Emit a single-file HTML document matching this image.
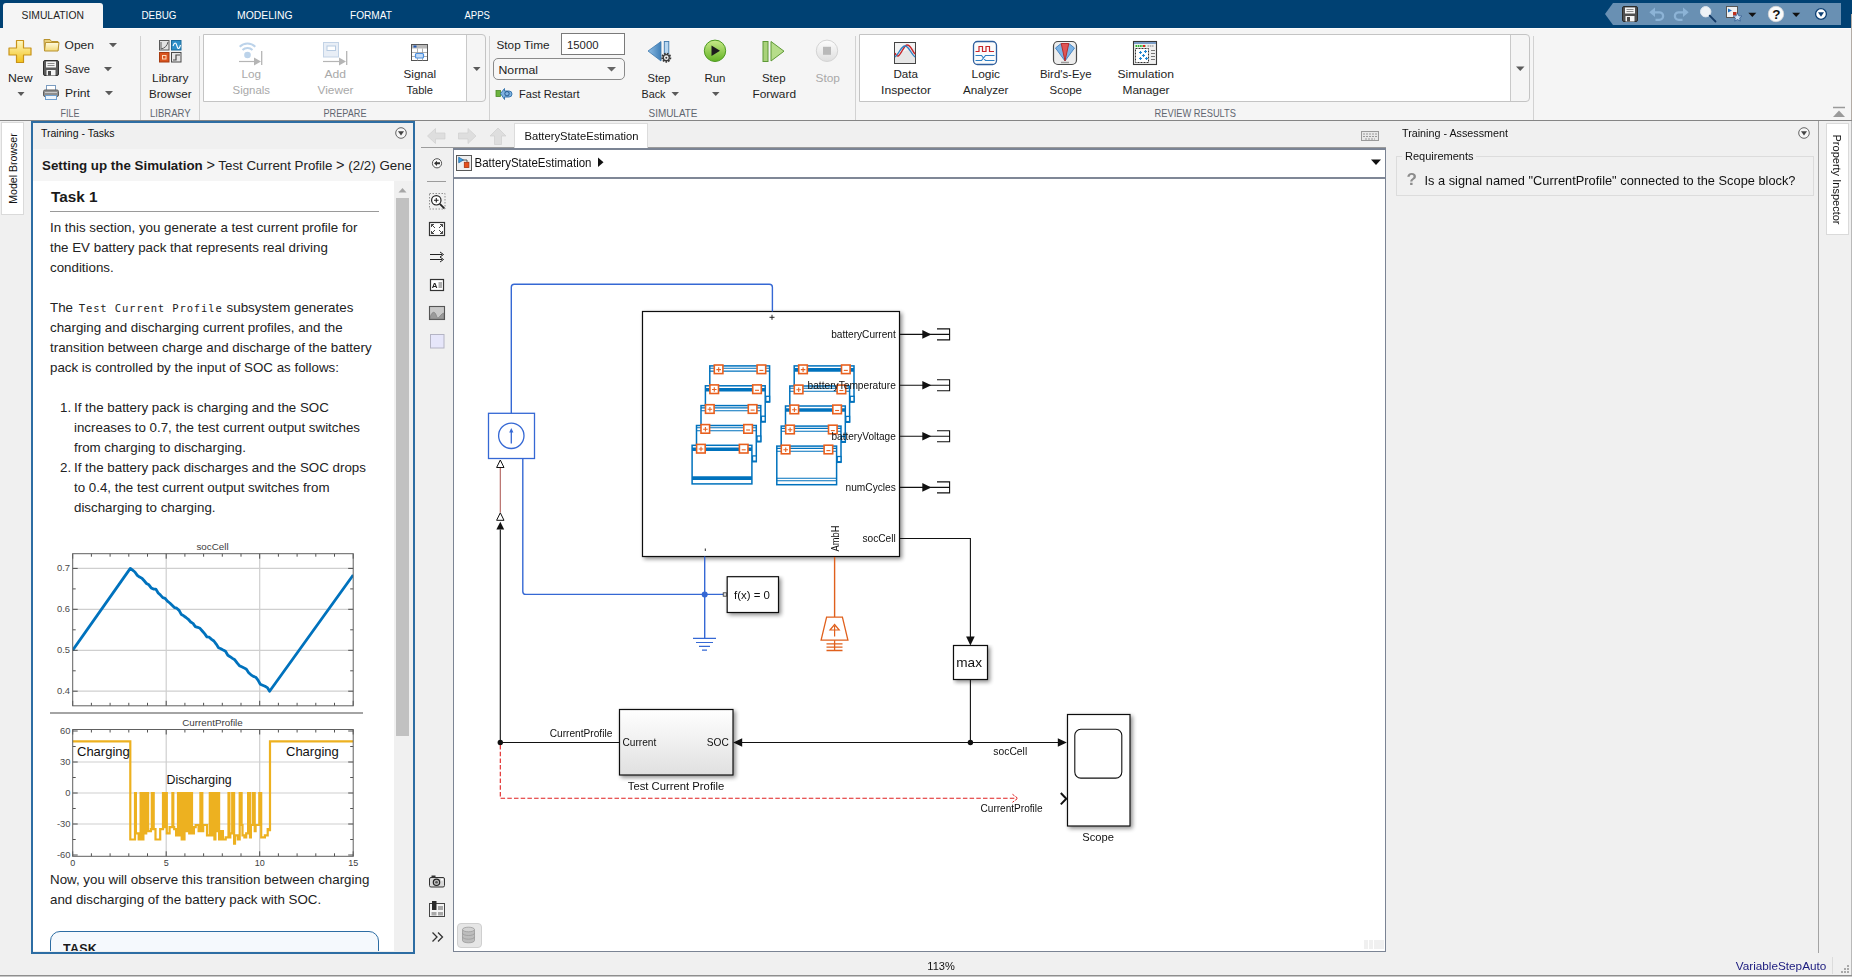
<!DOCTYPE html>
<html lang="en"><head><meta charset="utf-8"><title>BatteryStateEstimation - Simulink</title>
<style>
html,body{margin:0;padding:0}
body{width:1852px;height:977px;position:relative;overflow:hidden;background:#f0f0f0;font-family:"Liberation Sans",sans-serif;color:#222}
.a{position:absolute}
svg{position:absolute;left:0;top:0;overflow:visible}
svg text{font-family:"Liberation Sans",sans-serif}
.ui{font-size:11.5px;fill:#1e1e1e}
.dis{fill:#a9a9a9}
.sec{font-size:11px;fill:#5f6670}
.tab{font-size:11.3px;fill:#fff}
.lbl{font-size:10.2px;fill:#111}
.p{position:absolute;left:50px;width:335px;margin:0;font-size:13.333px;line-height:20px;color:#222;white-space:nowrap}
</style></head><body>
<!-- ===== top blue title/tab bar ===== -->
<div class="a" style="left:0;top:0;width:1852px;height:28px;background:#004173"></div>
<div class="a" style="left:3px;top:3px;width:100px;height:26px;background:#f5f5f5;border-radius:3px 3px 0 0"></div>
<!-- ===== toolstrip body ===== -->
<div class="a" style="left:0;top:28px;width:1851px;height:92px;background:#f5f5f5"></div>
<div class="a" style="left:1851px;top:14px;width:1px;height:107px;background:#b3aca6"></div>
<div class="a" style="left:103px;top:28px;width:1748px;height:1px;background:#fcfcfc"></div>
<div class="a" style="left:0;top:120px;width:1852px;height:1px;background:#858585"></div>
<!-- group separators -->
<div class="a" style="left:140px;top:36px;width:1px;height:84px;background:#d2d2d2"></div>
<div class="a" style="left:199px;top:36px;width:1px;height:84px;background:#d2d2d2"></div>
<div class="a" style="left:489px;top:36px;width:1px;height:84px;background:#d2d2d2"></div>
<div class="a" style="left:855px;top:36px;width:1px;height:84px;background:#d2d2d2"></div>
<div class="a" style="left:1533px;top:36px;width:1px;height:84px;background:#d2d2d2"></div>
<!-- PREPARE gallery -->
<div class="a" style="left:203px;top:34px;width:281px;height:66px;border:1px solid #c4c4c4;border-radius:0 4px 4px 0;background:#f5f5f5"></div>
<div class="a" style="left:204px;top:35px;width:262px;height:66px;background:#fff;border-right:1px solid #c9c9c9"></div>
<!-- REVIEW RESULTS gallery -->
<div class="a" style="left:859px;top:34px;width:669px;height:66px;border:1px solid #c4c4c4;border-radius:0 4px 4px 0;background:#f5f5f5"></div>
<div class="a" style="left:860px;top:35px;width:650px;height:66px;background:#fff;border-right:1px solid #c9c9c9"></div>
<!-- Stop time field + mode dropdown -->
<div class="a" style="left:561px;top:33px;width:62px;height:20px;border:1px solid #7a7a7a;background:#fff"></div>
<div class="a" style="left:493px;top:58px;width:130px;height:20px;border:1px solid #8a8a8a;border-radius:5px;background:#f7f7f7"></div>
<!-- quick access toolbar -->
<svg width="1852" height="30"><path d="M1605 14 L1613 3 H1841 V25 H1613 Z" fill="#6990b3"/></svg>
<svg width="1852" height="124">
<defs>
<linearGradient id="gY" x1="0" y1="0" x2="0" y2="1"><stop offset="0" stop-color="#fff9c4"/><stop offset="1" stop-color="#f2c21a"/></linearGradient>
<linearGradient id="gG" x1="0" y1="0" x2="0" y2="1"><stop offset="0" stop-color="#c9ea8a"/><stop offset="1" stop-color="#63b324"/></linearGradient>
<linearGradient id="gGr" x1="0" y1="0" x2="0" y2="1"><stop offset="0" stop-color="#fdfdfd"/><stop offset="1" stop-color="#dedede"/></linearGradient>
<linearGradient id="gB" x1="0" y1="0" x2="1" y2="0"><stop offset="0" stop-color="#8fbde4"/><stop offset="1" stop-color="#3f7fb8"/></linearGradient>
<linearGradient id="gF" x1="0" y1="0" x2="0" y2="1"><stop offset="0" stop-color="#fffbe0"/><stop offset="1" stop-color="#f3d978"/></linearGradient>
</defs>
<text class="tab" x="21.5" y="19.0" textLength="62.5" lengthAdjust="spacingAndGlyphs" style="fill:#1e1e1e">SIMULATION</text>
<text class="tab" x="141.5" y="19.0" textLength="35.0" lengthAdjust="spacingAndGlyphs">DEBUG</text>
<text class="tab" x="237.0" y="19.0" textLength="55.5" lengthAdjust="spacingAndGlyphs">MODELING</text>
<text class="tab" x="350.0" y="19.0" textLength="42.0" lengthAdjust="spacingAndGlyphs">FORMAT</text>
<text class="tab" x="464.5" y="19.0" textLength="25.5" lengthAdjust="spacingAndGlyphs">APPS</text>
<text class="sec" x="60.5" y="116.7" textLength="19.0" lengthAdjust="spacingAndGlyphs">FILE</text>
<text class="sec" x="150.0" y="116.7" textLength="40.5" lengthAdjust="spacingAndGlyphs">LIBRARY</text>
<text class="sec" x="323.5" y="116.7" textLength="43.0" lengthAdjust="spacingAndGlyphs">PREPARE</text>
<text class="sec" x="648.5" y="116.7" textLength="49.0" lengthAdjust="spacingAndGlyphs">SIMULATE</text>
<text class="sec" x="1154.5" y="116.7" textLength="81.5" lengthAdjust="spacingAndGlyphs">REVIEW RESULTS</text>
<text class="ui" x="8.0" y="81.9" textLength="24.5" lengthAdjust="spacingAndGlyphs">New</text>
<path d="M17.5 92H24.5L21.0 96Z" fill="#5a5a5a"/>
<text class="ui" x="64.5" y="48.8" textLength="29.5" lengthAdjust="spacingAndGlyphs">Open</text>
<path d="M109 43H117L113.0 47.2Z" fill="#5a5a5a"/>
<text class="ui" x="64.5" y="73.0" textLength="25.5" lengthAdjust="spacingAndGlyphs">Save</text>
<path d="M104 67H112L108.0 71.2Z" fill="#5a5a5a"/>
<text class="ui" x="65.0" y="96.8" textLength="25.0" lengthAdjust="spacingAndGlyphs">Print</text>
<path d="M105 91H113L109.0 95.2Z" fill="#5a5a5a"/>
<path d="M16.5 40.5h7v7.5h7.500v7h-7.500v7.500h-7v-7.500h-7.500v-7h7.500z" fill="url(#gY)" stroke="#c8931a" stroke-width="1.2" stroke-linejoin="round"/>
<path d="M44 39.500h6l1.500 2h6.500v9h-13.500z" fill="#e9cf7a" stroke="#b8922e" stroke-width="1"/><path d="M45.500 42.500h13.500l-1 8.500h-13.500z" fill="url(#gF)" stroke="#b8922e" stroke-width="1"/>
<rect x="43.500" y="60.500" width="15" height="15" rx="1.500" fill="#5b5b5b" stroke="#2e2e2e"/><rect x="46" y="61.500" width="10" height="6" fill="#f4f4f4"/><path d="M47.500 63.500h7M47.500 65.500h7" stroke="#8d8d8d" stroke-width="1"/><rect x="46.500" y="70" width="9" height="5.500" fill="#f4f4f4"/><rect x="48" y="71" width="3" height="4.500" fill="#4a4a4a"/>
<rect x="46.500" y="85.500" width="9" height="5" fill="#fff" stroke="#7b9cc0"/><rect x="43.500" y="90" width="15" height="6.500" rx="1.500" fill="#8e8e8e" stroke="#5d5d5d"/><rect x="45.500" y="95.500" width="11" height="4" fill="#eef5fc" stroke="#6f9fce"/><path d="M45 92.500h12" stroke="#c9c9c9"/>
<rect x="159.500" y="40.500" width="9.500" height="9.500" fill="#e3e3e3" stroke="#5a5a5a"/><path d="M161 49v-7M161 49c4-1 6-3 7-7" stroke="#5a5a5a" fill="none"/><rect x="171.500" y="40.500" width="9.500" height="9.500" fill="#2d8fc8" stroke="#1f6c9b"/><path d="M173 46c1.500-4 3-4 4 0s2.500 3 3.500-1" stroke="#fff" fill="none" stroke-width="1.100"/><rect x="159.500" y="52.500" width="9.500" height="9.500" fill="#d9541e" stroke="#a63b10"/><rect x="162.500" y="55.500" width="3.500" height="3.500" fill="none" stroke="#ffd9b8"/><rect x="171.500" y="52.500" width="9.500" height="9.500" fill="#e6e6e6" stroke="#4a4a4a"/><path d="M173 60h3v-5h4" stroke="#4a4a4a" fill="none" stroke-width="1.200"/>
<text class="ui" x="152.0" y="81.9" textLength="36.5" lengthAdjust="spacingAndGlyphs">Library</text>
<text class="ui" x="149.0" y="97.6" textLength="42.5" lengthAdjust="spacingAndGlyphs">Browser</text>
<text class="ui dis" x="241.5" y="78.1" textLength="19.5" lengthAdjust="spacingAndGlyphs">Log</text>
<text class="ui dis" x="232.5" y="93.6" textLength="37.5" lengthAdjust="spacingAndGlyphs">Signals</text>
<text class="ui dis" x="324.5" y="78.1" textLength="21.5" lengthAdjust="spacingAndGlyphs">Add</text>
<text class="ui dis" x="317.5" y="93.6" textLength="36.0" lengthAdjust="spacingAndGlyphs">Viewer</text>
<text class="ui" x="403.5" y="78.1" textLength="32.5" lengthAdjust="spacingAndGlyphs">Signal</text>
<text class="ui" x="406.5" y="93.6" textLength="26.5" lengthAdjust="spacingAndGlyphs">Table</text>
<path d="M473 67H480.5L476.75 71Z" fill="#5a5a5a"/>
<circle cx="247.500" cy="55" r="3.300" fill="#bcd3ea"/><path d="M242.500 50a7 7 0 0 1 10 0M239.700 46.800a11 11 0 0 1 15.600 0" stroke="#bcd3ea" stroke-width="2" fill="none"/><path d="M239 61.500h17" stroke="#b5b5b5" stroke-width="1.200"/><path d="M254 57.500l7 4-7 4z" fill="#b5b5b5"/><path d="M261.700 51v14" stroke="#b5b5b5" stroke-width="1.300"/>
<rect x="323.500" y="42.500" width="15" height="14.500" fill="#e8eef6" stroke="#c3d3e6"/><rect x="327" y="46" width="8.500" height="4.500" fill="#fff" stroke="#b7cbe2"/><path d="M323 61.500h17" stroke="#b5b5b5" stroke-width="1.200"/><path d="M339 57.500l7 4-7 4z" fill="#b5b5b5"/><path d="M346.700 51v14" stroke="#b5b5b5" stroke-width="1.300"/>
<rect x="411.500" y="44.500" width="16" height="16" fill="#fff" stroke="#555"/><rect x="412" y="45" width="15" height="3.500" fill="#b9b9b9"/><rect x="413.500" y="45.500" width="3" height="2" fill="#1c57b5"/><path d="M412 52.500h15M412 56.500h15M417.500 48.500v12M422.500 48.500v12" stroke="#9a9a9a" stroke-width="0.800"/><rect x="415.500" y="53.500" width="8" height="4.500" rx="1" fill="#c4dcf7" stroke="#4b8fe0" stroke-width="1.200"/>
<text class="ui" x="496.5" y="48.7" textLength="53.0" lengthAdjust="spacingAndGlyphs">Stop Time</text>
<text class="ui" x="567.0" y="48.7" textLength="31.5" lengthAdjust="spacingAndGlyphs">15000</text>
<text class="ui" x="498.5" y="73.8" textLength="39.5" lengthAdjust="spacingAndGlyphs">Normal</text>
<path d="M607 67H616L611.5 71.5Z" fill="#666"/>
<text class="ui" x="519.0" y="97.7" textLength="60.5" lengthAdjust="spacingAndGlyphs">Fast Restart</text>
<rect x="496" y="90.500" width="4.500" height="6" fill="#6db33f" stroke="#4a8a25" stroke-width="0.800"/><path d="M500.500 93.500l4-5v2.500h4.500a3 3 0 0 1 0 6h-4.500v2.500z" fill="#7fb2e0" stroke="#2f6ea8" stroke-width="0.900"/><circle cx="507" cy="93.700" r="2.200" fill="none" stroke="#1d4f86" stroke-width="0.900"/>
<path d="M648 51l13-9.500v19.500z" fill="url(#gB)" stroke="#3e78ad" stroke-width="0.800"/><rect x="664.300" y="41.500" width="4.500" height="15" fill="#b7d6f0" stroke="#3e78ad" stroke-width="0.900"/><circle cx="666.300" cy="57.700" r="4" fill="#f2f2f2" stroke="#3a3a3a" stroke-width="2" stroke-dasharray="1.600 1.100"/><circle cx="666.300" cy="57.700" r="3" fill="#f4f4f4" stroke="#3a3a3a" stroke-width="1.300"/><circle cx="666.300" cy="57.700" r="1" fill="#3a3a3a"/>
<text class="ui" x="647.5" y="81.9" textLength="23.0" lengthAdjust="spacingAndGlyphs">Step</text>
<text class="ui" x="641.5" y="97.7" textLength="24.0" lengthAdjust="spacingAndGlyphs">Back</text>
<path d="M671.5 92H679L675.25 96Z" fill="#5a5a5a"/>
<circle cx="715" cy="50.800" r="10.700" fill="url(#gG)" stroke="#4e9a22" stroke-width="1"/><path d="M711.500 45.500l8.500 5.300-8.500 5.300z" fill="#1d1d1d"/>
<text class="ui" x="704.5" y="81.9" textLength="21.0" lengthAdjust="spacingAndGlyphs">Run</text>
<path d="M712 92H719.5L715.75 96Z" fill="#5a5a5a"/>
<rect x="763" y="41.500" width="5" height="20" fill="#a9d27a" stroke="#5e9a36" stroke-width="1"/><path d="M771 41.500l13 9.700-13 9.800z" fill="#b6dd8a" stroke="#5e9a36" stroke-width="1"/>
<text class="ui" x="762.0" y="81.9" textLength="23.5" lengthAdjust="spacingAndGlyphs">Step</text>
<text class="ui" x="752.5" y="97.7" textLength="43.5" lengthAdjust="spacingAndGlyphs">Forward</text>
<circle cx="827" cy="50.800" r="10.700" fill="url(#gGr)" stroke="#d4d4d4" stroke-width="1"/><rect x="823" y="46.800" width="8" height="8" fill="#b9b9b9"/>
<text class="ui dis" x="815.5" y="81.9" textLength="24.5" lengthAdjust="spacingAndGlyphs">Stop</text>
<text class="ui" x="893.5" y="78.1" textLength="24.5" lengthAdjust="spacingAndGlyphs">Data</text>
<text class="ui" x="881.0" y="93.6" textLength="50.0" lengthAdjust="spacingAndGlyphs">Inspector</text>
<text class="ui" x="971.5" y="78.1" textLength="28.5" lengthAdjust="spacingAndGlyphs">Logic</text>
<text class="ui" x="963.0" y="93.6" textLength="45.5" lengthAdjust="spacingAndGlyphs">Analyzer</text>
<text class="ui" x="1040.0" y="78.1" textLength="51.5" lengthAdjust="spacingAndGlyphs">Bird's-Eye</text>
<text class="ui" x="1049.5" y="93.6" textLength="32.5" lengthAdjust="spacingAndGlyphs">Scope</text>
<text class="ui" x="1117.5" y="78.1" textLength="56.5" lengthAdjust="spacingAndGlyphs">Simulation</text>
<text class="ui" x="1122.5" y="93.6" textLength="47.0" lengthAdjust="spacingAndGlyphs">Manager</text>
<path d="M1516 66.5H1524.5L1520.25 71Z" fill="#5a5a5a"/>
<rect x="894.500" y="42.500" width="21" height="21" fill="#f3f3f3" stroke="#444"/><path d="M895 63v-9l20-6v15z" fill="#e6e6e6"/><path d="M895 53c4 10 8-8 12-8s5 6 8 9" stroke="#c8252a" stroke-width="1.400" fill="none"/><path d="M895 57c4-3 6-11 10-11s6 8 10 11" stroke="#2d7fc4" stroke-width="1.400" fill="none"/>
<rect x="973.500" y="41.500" width="23" height="23" rx="4" fill="#fbfbfb" stroke="#2f5f9e" stroke-width="1.300"/><path d="M975.500 51.500h3.500v-5h3.500v5h3.500v-5h3.500v5h4.500" stroke="#c8252a" stroke-width="1.200" fill="none"/><path d="M975.500 55.500h6l4 5h9M975.500 60.500h6l4-5h9" stroke="#2d7fc4" stroke-width="1.200" fill="none"/>
<rect x="1053.500" y="41.500" width="23" height="23" rx="4.500" fill="#ededed" stroke="#4a4a4a" stroke-width="1.200"/><path d="M1065 61l-9.500-13 5-4h9l5 4z" fill="#7db4e6" stroke="#3f7fc0" stroke-width="0.900"/><path d="M1065 61l-3.800-17.500h7.600z" fill="#e05555" stroke="#b32525" stroke-width="0.900"/><path d="M1061 62.500h8" stroke="#999" stroke-width="1.500"/>
<rect x="1133.500" y="41.500" width="23" height="23" fill="#f0f0f0" stroke="#3a3a3a" stroke-width="1.100"/><rect x="1134" y="42" width="22" height="2" fill="#7a9cc6"/><path d="M1135.500 46h10" stroke="#2eb82e" stroke-width="1.800" stroke-dasharray="1.600 0.700"/><path d="M1143 46h2" stroke="#e02020" stroke-width="1.800"/><path d="M1147.500 46h6" stroke="#b5b5b5" stroke-width="1.800" stroke-dasharray="1.600 0.700"/><rect x="1135.500" y="48.500" width="13" height="14" fill="#fff" stroke="#333" stroke-dasharray="2 1"/><path d="M1139 52.500h3M1140.500 51v3M1144 51.500h3M1145.500 50v3M1142 55.500h3M1143.500 54v3M1139 58.500h3M1140.500 57v3M1145 58.500h3M1146.500 57v3" stroke="#1f86d0" stroke-width="1.100"/><path d="M1151 50.500h4M1151 53.500h4M1151 56.500h4M1151 59.500h4" stroke="#777" stroke-width="1"/>
<path d="M1833 107.500h12" stroke="#9a9a9a" stroke-width="1.500"/><path d="M1833 117l6-6.500 6 6.500z" fill="#9a9a9a"/>
<rect x="1622.500" y="6.500" width="15" height="15" rx="1.500" fill="#4f4f4f" stroke="#2a2a2a"/><rect x="1625" y="7.500" width="10" height="6" fill="#f4f4f4"/><path d="M1626.500 9.500h7M1626.500 11.500h7" stroke="#8d8d8d" stroke-width="1"/><rect x="1625.500" y="16" width="9" height="5.500" fill="#f4f4f4"/><rect x="1627" y="17" width="3" height="4.500" fill="#4a4a4a"/>
<path d="M1652 12.300h7.300a3.800 3.800 0 0 1 0 7.600h-3.800" stroke="#8cb3d6" stroke-width="2.300" fill="none"/><path d="M1649.300 12.300l5.700-4.800v9.600z" fill="#8cb3d6"/>
<path d="M1686 12.300h-7.300a3.800 3.800 0 0 0 0 7.600h3.800" stroke="#8cb3d6" stroke-width="2.300" fill="none"/><path d="M1688.700 12.300l-5.700-4.800v9.600z" fill="#8cb3d6"/>
<circle cx="1705.700" cy="11.700" r="5.200" fill="#eef2f6" stroke="#dfe6ee" stroke-width="1"/><path d="M1709.700 15.700l5.800 5.800" stroke="#143a66" stroke-width="1.800" stroke-linecap="round"/>
<rect x="1726.500" y="6.500" width="11" height="11" fill="#f0f0f0" stroke="#555"/><path d="M1728 8.500l4 2-4 2z" fill="#1f6fc0"/><rect x="1733" y="12" width="3.500" height="3.500" fill="#c0301c"/><path d="M1737.500 13l1.300 2.800 3 .3-2.200 2 .7 3-2.800-1.600-2.800 1.600.7-3-2.200-2 3-.3z" fill="#cfe2f5" stroke="#27528a" stroke-width="0.700"/>
<path d="M1748.3 12.8H1756.3L1752.3 17Z" fill="#111"/>
<circle cx="1776" cy="14" r="7.700" fill="#fafafa" stroke="#d5d5d5" stroke-width="0.800"/><text x="1772.300" y="19" style="font-size:13.500px;font-weight:700;fill:#111">?</text>
<path d="M1792.2 12.8H1800.2L1796.2 17Z" fill="#111"/>
<circle cx="1821" cy="14" r="5.400" fill="#fff" stroke="#0c3f73" stroke-width="1.300"/><path d="M1818 12.300h6l-3 4.500z" fill="#0c3f73"/>
</svg>
<div class="a" style="left:1px;top:122px;width:21px;height:91px;background:#fff;border:1px solid #dadada"></div>
<div class="a" style="left:31px;top:121px;width:380px;height:829px;border:2px solid #2d6da3;background:#f0f0f0"></div>
<div class="a" style="left:33px;top:149px;width:380px;height:32px;background:#f5f5f5"></div>
<div class="a" style="left:42px;top:155px;width:369px;height:22px;overflow:hidden;white-space:nowrap;font-size:13.333px;line-height:20px;color:#222"><b style="color:#1a1a1a">Setting up the Simulation</b> <span style="font-size:14.500px">&gt;</span> Test Current Profile <span style="font-size:14.500px">&gt;</span> (2/2) Generate the Test Current Profile</div>
<div class="a" style="left:33px;top:181px;width:361px;height:770px;background:#fff;overflow:hidden">
</div>
<div class="a" style="left:396px;top:198px;width:13px;height:538px;background:#c1c1c1"></div>
<svg width="420" height="200"><path d="M398.500 192.500h8l-4-4.500z" fill="#a6a6a6"/></svg>
<div class="a" style="left:51px;top:186px;font-size:15.333px;line-height:22px;font-weight:700;color:#1a1a1a;white-space:nowrap">Task 1</div>
<div class="a" style="left:50px;top:211px;width:329px;height:1px;background:#9a9a9a"></div>
<div class="p" style="top:218px;left:50px">In this section, you generate a test current profile for<br>the EV battery pack that represents real driving<br>conditions.</div>
<div class="p" style="top:298px;left:50px">The <span style="font-family:'DejaVu Sans Mono','Liberation Mono',monospace;font-size:10.500px;letter-spacing:0.870px;margin-left:2.100px;margin-right:0.300px">Test Current Profile</span> subsystem generates<br>charging and discharging current profiles, and the<br>transition between charge and discharge of the battery<br>pack is controlled by the input of SOC as follows:</div>
<div class="p" style="top:398px;left:60px">1.</div>
<div class="p" style="top:398px;left:74px">If the battery pack is charging and the SOC<br>increases to 0.7, the test current output switches<br>from charging to discharging.</div>
<div class="p" style="top:458px;left:60px">2.</div>
<div class="p" style="top:458px;left:74px">If the battery pack discharges and the SOC drops<br>to 0.4, the test current output switches from<br>discharging to charging.</div>
<div class="p" style="top:870px;left:50px">Now, you will observe this transition between charging<br>and discharging of the battery pack with SOC.</div>
<div class="a" style="left:50px;top:712px;width:313px;height:2px;background:#a4a4a4"></div>
<div class="a" style="left:50px;top:931px;width:329px;height:20px;overflow:hidden"><div style="width:327px;height:60px;border:1px solid #2d6da3;border-radius:10px;background:#f5f9fd"></div></div>
<div class="a" style="left:63px;top:940px;width:100px;height:11px;overflow:hidden"><div style="font-size:12.500px;line-height:18px;font-weight:700;color:#1a1a1a;letter-spacing:0.200px">TASK</div></div>
<svg width="420" height="977" style="font-family:'Liberation Sans',sans-serif">
<rect x="72.7" y="553.7" width="280.5" height="152.1" fill="#fff" stroke="none"/>
<path d="M166.2 553.7V705.8M259.7 553.7V705.8M72.7 691.2H353.2M72.7 650.3H353.2M72.7 609.3H353.2M72.7 568.4H353.2" stroke="#cfcfcf" stroke-width="1.200" fill="none"/>
<clipPath id="c1"><rect x="72.7" y="553.7" width="280.5" height="152.1"/></clipPath><path d="M72.7 650.3 L130.3 568.4 L132.6 570.2 L134.9 572.0 L137.3 575.4 L139.6 577.1 L141.9 578.2 L144.2 580.8 L146.5 583.5 L148.9 584.8 L151.2 587.9 L153.5 589.1 L155.8 589.1 L158.2 592.9 L160.5 595.1 L162.8 597.6 L165.1 598.3 L167.4 601.1 L169.8 603.0 L172.1 605.3 L174.4 607.6 L176.7 608.2 L179.1 610.4 L181.4 614.6 L183.7 615.8 L186.0 617.5 L188.3 619.3 L190.7 622.0 L193.0 623.4 L195.3 626.6 L197.6 627.3 L200.0 628.3 L202.3 631.0 L204.6 633.6 L206.9 636.9 L209.2 637.2 L211.6 639.4 L213.9 641.0 L216.2 644.1 L218.5 647.7 L220.9 648.7 L223.2 650.1 L225.5 651.3 L227.8 655.3 L230.1 656.7 L232.5 658.4 L234.8 659.8 L237.1 662.9 L239.4 665.7 L241.7 666.8 L244.1 667.9 L246.4 669.3 L248.7 672.7 L251.0 674.8 L253.4 676.4 L255.7 677.2 L258.0 680.1 L260.3 684.2 L262.6 685.2 L265.0 686.2 L267.3 687.6 L269.6 691.2 L353.2 575.0" stroke="#0072bd" stroke-width="2.800" fill="none" stroke-linejoin="round" clip-path="url(#c1)"/>
<path d="M72.7 705.8v-5M72.7 553.7v5M91.4 705.8v-3M91.4 553.7v3M110.1 705.8v-3M110.1 553.7v3M128.8 705.8v-3M128.8 553.7v3M147.5 705.8v-3M147.5 553.7v3M166.2 705.8v-5M166.2 553.7v5M184.9 705.8v-3M184.9 553.7v3M203.6 705.8v-3M203.6 553.7v3M222.3 705.8v-3M222.3 553.7v3M241.0 705.8v-3M241.0 553.7v3M259.7 705.8v-5M259.7 553.7v5M278.4 705.8v-3M278.4 553.7v3M297.1 705.8v-3M297.1 553.7v3M315.8 705.8v-3M315.8 553.7v3M334.5 705.8v-3M334.5 553.7v3M353.2 705.8v-5M353.2 553.7v5M72.7 691.2h5M353.2 691.2h-5M72.7 670.8h3M353.2 670.8h-3M72.7 650.3h5M353.2 650.3h-5M72.7 629.8h3M353.2 629.8h-3M72.7 609.3h5M353.2 609.3h-5M72.7 588.9h3M353.2 588.9h-3M72.7 568.4h5M353.2 568.4h-5" stroke="#404040" stroke-width="0.900" fill="none"/>
<rect x="72.7" y="553.7" width="280.5" height="152.1" fill="none" stroke="#606060" stroke-width="1"/>
<text x="70" y="693.6" text-anchor="end" style="font-size:9.400px;fill:#4a4a4a">0.4</text>
<text x="70" y="652.7" text-anchor="end" style="font-size:9.400px;fill:#4a4a4a">0.5</text>
<text x="70" y="611.7" text-anchor="end" style="font-size:9.400px;fill:#4a4a4a">0.6</text>
<text x="70" y="570.8" text-anchor="end" style="font-size:9.400px;fill:#4a4a4a">0.7</text>
<text x="212.500" y="549.500" text-anchor="middle" style="font-size:9.800px;fill:#404040">socCell</text>
<rect x="72.7" y="729.5" width="280.5" height="126.8" fill="#fff"/>
<path d="M166.2 729.5V856.3M259.7 729.5V856.3M72.7 824.0H353.2M72.7 793.0H353.2M72.7 762.0H353.2" stroke="#cfcfcf" stroke-width="1.200" fill="none"/>
<path d="M72.7 741.4H130.3V839.5H131.2V839.5H132.2V839.5H133.1V839.5H134.0V839.5H135.0V793.0H135.9V833.3H136.8V833.3H137.8V833.3H138.7V839.5H139.6V839.5H140.6V793.0H141.5V793.0H142.5V839.5H143.4V793.0H144.3V833.3H145.3V833.3H146.2V793.0H147.1V793.0H148.1V831.2H149.0V831.2H149.9V831.2H150.9V829.2H151.8V793.0H152.7V793.0H153.7V829.2H154.6V829.2H155.5V839.5H156.5V839.5H157.4V839.5H158.3V839.5H159.3V839.5H160.2V829.2H161.2V829.2H162.1V829.2H163.0V793.0H164.0V827.1H164.9V793.0H165.8V793.0H166.8V833.3H167.7V833.3H168.6V833.3H169.6V827.1H170.5V827.1H171.4V827.1H172.4V793.0H173.3V827.1H174.2V829.2H175.2V829.2H176.1V835.4H177.0V835.4H178.0V793.0H178.9V835.4H179.9V793.0H180.8V793.0H181.7V839.5H182.7V793.0H183.6V839.5H184.5V793.0H185.5V793.0H186.4V831.2H187.3V793.0H188.3V793.0H189.2V833.3H190.1V793.0H191.1V793.0H192.0V833.3H192.9V833.3H193.9V827.1H194.8V827.1H195.7V825.0H196.7V825.0H197.6V825.0H198.6V831.2H199.5V831.2H200.4V793.0H201.4V793.0H202.3V831.2H203.2V825.0H204.2V825.0H205.1V825.0H206.0V825.0H207.0V835.4H207.9V835.4H208.8V835.4H209.8V793.0H210.7V793.0H211.6V835.4H212.6V793.0H213.5V793.0H214.4V839.5H215.4V793.0H216.3V793.0H217.3V831.2H218.2V793.0H219.1V839.5H220.1V839.5H221.0V831.2H221.9V831.2H222.9V839.5H223.8V839.5H224.7V839.5H225.7V837.4H226.6V837.4H227.5V837.4H228.5V793.0H229.4V837.4H230.3V833.3H231.3V833.3H232.2V793.0H233.1V793.0H234.1V843.6H235.0V835.4H236.0V835.4H236.9V835.4H237.8V839.5H238.8V839.5H239.7V793.0H240.6V793.0H241.6V825.0H242.5V835.4H243.4V835.4H244.4V837.4H245.3V837.4H246.2V833.3H247.2V833.3H248.1V793.0H249.0V793.0H250.0V837.4H250.9V825.0H251.8V825.0H252.8V793.0H253.7V793.0H254.7V831.2H255.6V825.0H256.5V825.0H257.5V825.0H258.4V825.0H259.3V793.0H260.3V793.0H261.2V837.4H262.1V837.4H263.1V837.4H264.0V837.4H264.9V835.4H265.9V835.4H266.8V835.4H267.7V829.2H268.7V829.2H269.6V830.2H270.0V741.4H353.2" stroke="#edb120" stroke-width="2.200" fill="none" stroke-linejoin="miter"/>
<path d="M72.7 856.3v-5M72.7 729.5v5M91.4 856.3v-3M91.4 729.5v3M110.1 856.3v-3M110.1 729.5v3M128.8 856.3v-3M128.8 729.5v3M147.5 856.3v-3M147.5 729.5v3M166.2 856.3v-5M166.2 729.5v5M184.9 856.3v-3M184.9 729.5v3M203.6 856.3v-3M203.6 729.5v3M222.3 856.3v-3M222.3 729.5v3M241.0 856.3v-3M241.0 729.5v3M259.7 856.3v-5M259.7 729.5v5M278.4 856.3v-3M278.4 729.5v3M297.1 856.3v-3M297.1 729.5v3M315.8 856.3v-3M315.8 729.5v3M334.5 856.3v-3M334.5 729.5v3M353.2 856.3v-5M353.2 729.5v5M72.7 855.0h5M353.2 855.0h-5M72.7 839.5h3M353.2 839.5h-3M72.7 824.0h5M353.2 824.0h-5M72.7 808.5h3M353.2 808.5h-3M72.7 793.0h5M353.2 793.0h-5M72.7 777.5h3M353.2 777.5h-3M72.7 762.0h5M353.2 762.0h-5M72.7 746.5h3M353.2 746.5h-3M72.7 731.0h5M353.2 731.0h-5" stroke="#404040" stroke-width="0.900" fill="none"/>
<rect x="72.7" y="729.5" width="280.5" height="126.8" fill="none" stroke="#606060" stroke-width="1"/>
<text x="70.500" y="857.6" text-anchor="end" style="font-size:9.400px;fill:#4a4a4a">-60</text>
<text x="70.500" y="826.6" text-anchor="end" style="font-size:9.400px;fill:#4a4a4a">-30</text>
<text x="70.500" y="795.6" text-anchor="end" style="font-size:9.400px;fill:#4a4a4a">0</text>
<text x="70.500" y="764.6" text-anchor="end" style="font-size:9.400px;fill:#4a4a4a">30</text>
<text x="70.500" y="733.6" text-anchor="end" style="font-size:9.400px;fill:#4a4a4a">60</text>
<text x="72.7" y="865.500" text-anchor="middle" style="font-size:9px;fill:#404040">0</text>
<text x="166.2" y="865.500" text-anchor="middle" style="font-size:9px;fill:#404040">5</text>
<text x="259.7" y="865.500" text-anchor="middle" style="font-size:9px;fill:#404040">10</text>
<text x="353.2" y="865.500" text-anchor="middle" style="font-size:9px;fill:#404040">15</text>
<text x="212.500" y="725.500" text-anchor="middle" style="font-size:9.800px;fill:#404040">CurrentProfile</text>
<text x="77" y="756.300" style="font-size:13px;fill:#111">Charging</text>
<text x="286" y="756.300" style="font-size:13px;fill:#111">Charging</text>
<text x="166.500" y="783.500" style="font-size:12.350px;fill:#111">Discharging</text>
<text x="41" y="137" textLength="73.500" lengthAdjust="spacingAndGlyphs" style="font-size:11px;fill:#111">Training - Tasks</text>
<circle cx="401" cy="133" r="5.300" fill="#f6f6f6" stroke="#555" stroke-width="0.900"/><path d="M398 131.200h6l-3 4.300z" fill="#444"/>
<text transform="translate(16.500 203.800) rotate(-90)" textLength="70.500" lengthAdjust="spacingAndGlyphs" style="font-size:11px;fill:#111">Model Browser</text>
</svg>
<div class="a" style="left:421px;top:147px;width:965px;height:1px;background:#9c9c9c"></div>
<div class="a" style="left:514px;top:123px;width:134px;height:25px;background:#fff;border:1px solid #dcdcdc;border-bottom:none;box-sizing:border-box"></div>
<div class="a" style="left:453px;top:148px;width:931px;height:801px;background:#fff;border:1px solid #7b8494;border-top:2px solid #7b8494"></div>
<div class="a" style="left:454px;top:177px;width:931px;height:2px;background:#7f8796"></div>
<div class="a" style="left:457px;top:923px;width:23px;height:23px;border:1px solid #cfcfcf;border-radius:4px;background:#e6e6e6"></div>
<div class="a" style="left:1364px;top:940px;width:4px;height:9px;background:#f0f0f0"></div><div class="a" style="left:1369px;top:940px;width:4px;height:9px;background:#f0f0f0"></div><div class="a" style="left:1374px;top:940px;width:10px;height:9px;background:#f0f0f0"></div>
<svg width="1852" height="977" style="will-change:transform">
<defs>
<filter id="sh" x="-10%" y="-10%" width="130%" height="130%"><feGaussianBlur in="SourceAlpha" stdDeviation="1.9"/><feOffset dx="2.400" dy="2.400"/><feComponentTransfer><feFuncA type="linear" slope="0.45"/></feComponentTransfer><feMerge><feMergeNode/><feMergeNode in="SourceGraphic"/></feMerge></filter>
<linearGradient id="gSub" x1="0" y1="0" x2="0" y2="1"><stop offset="0" stop-color="#ffffff"/><stop offset="1" stop-color="#e0e0e0"/></linearGradient>
</defs>
<text x="524.5" y="139.6" textLength="114.0" lengthAdjust="spacingAndGlyphs" style="font-size:11.5px;fill:#111">BatteryStateEstimation</text>
<path d="M427.500 136l8-7.500v4.500h9.500v6h-9.500v4.500z" fill="#dedede" stroke="#d0d0d0" stroke-width="0.700"/><path d="M476 136l-8-7.500v4.500h-9.500v6h9.500v4.500z" fill="#dedede" stroke="#d0d0d0" stroke-width="0.700"/><path d="M498 128l8 8h-4.500v8.500h-7v-8.500h-4.500z" fill="#dedede" stroke="#d0d0d0" stroke-width="0.700"/>
<rect x="1361.500" y="131.500" width="17" height="9" fill="#e9e9e9" stroke="#9a9a9a"/><path d="M1363 134h14M1363 136.500h14M1365 139h10" stroke="#9a9a9a" stroke-width="1" stroke-dasharray="2 1"/>
<rect x="456.500" y="155.500" width="15" height="15" fill="#efefef" stroke="#585858"/><path d="M462 160h5v3" stroke="#444" stroke-width="0.900" fill="none"/><path d="M458.700 157.200l4.800 2.800-4.800 2.800z" fill="#3aa0e0" stroke="#1b5f9c" stroke-width="0.700"/><rect x="464.300" y="162.300" width="4.600" height="5.200" fill="#e8501c" stroke="#a8320c" stroke-width="0.800"/>
<text x="474.5" y="166.7" textLength="117.0" lengthAdjust="spacingAndGlyphs" style="font-size:12.3px;fill:#111">BatteryStateEstimation</text>
<path d="M598 157.500v9.500l5.500-4.700z" fill="#111"/>
<path d="M1371 159.500h10l-5 5.500z" fill="#111"/>
<circle cx="437" cy="163.300" r="4.600" fill="#fafafa" stroke="#555" stroke-width="1"/><path d="M434 163.300l3-2.600v1.600h3v2h-3v1.600z" fill="#333"/>
<path d="M427 181.500h19" stroke="#9c9c9c" stroke-width="1"/>
<rect x="429.500" y="193.500" width="15.500" height="15.500" fill="none" stroke="#777" stroke-width="0.800" stroke-dasharray="1.500 1.500"/><circle cx="436.300" cy="200.300" r="4.700" fill="#fff" stroke="#222" stroke-width="1.200"/><path d="M434 200.300h4.600M436.300 198v4.600" stroke="#222" stroke-width="1.100"/><path d="M439.800 203.800l4.500 4.500" stroke="#222" stroke-width="1.800"/>
<rect x="429.500" y="222.500" width="15" height="13" fill="#fff" stroke="#333" stroke-width="1.200"/><path d="M431.500 224.500l3.500 3.500M431.500 224.500h2.500M431.500 224.500v2.500M442.500 224.500l-3.500 3.500M442.500 224.500h-2.500M442.500 224.500v2.500M431.500 233.500l3.500-3.500M431.500 233.500h2.500M431.500 233.500v-2.500M442.500 233.500l-3.500-3.500M442.500 233.500h-2.500M442.500 233.500v-2.500" stroke="#333" stroke-width="0.900" fill="none"/>
<path d="M430 254.500h12M430 259.500h12M440 252l3.500 2.500-3.500 2.500M440 257l3.500 2.500-3.500 2.500" stroke="#222" stroke-width="1" fill="none"/>
<rect x="430.500" y="279.500" width="13" height="11" fill="#fff" stroke="#333" stroke-width="1.200"/><text x="431.800" y="288.300" style="font-size:8px;font-weight:700;fill:#222">A</text><path d="M438.500 283h3.500M438.500 285h3.500M438.500 287h3.500" stroke="#333" stroke-width="0.800"/>
<rect x="429.500" y="306.500" width="15" height="13" fill="#c9c9c9" stroke="#555" stroke-width="1.100"/><path d="M430.500 316c2-5 4.500-5 6 0s4-2 7-3v6h-13z" fill="#9a9a9a" stroke="#777" stroke-width="0.600"/>
<rect x="430.500" y="334.500" width="13.500" height="13.500" fill="#e6e6fa" stroke="#b4b4c4"/>
<rect x="429.500" y="877.500" width="15" height="9.500" rx="1.500" fill="#d8d8d8" stroke="#333" stroke-width="1"/><rect x="431.500" y="875.500" width="4" height="2" fill="#333"/><circle cx="436.500" cy="882.300" r="3.200" fill="#bbb" stroke="#222" stroke-width="1.200"/><circle cx="436.500" cy="882.300" r="1.300" fill="#555"/><rect x="441" y="879" width="2" height="1.500" fill="#fff"/>
<rect x="429.500" y="903.500" width="15" height="13" fill="#f4f4f4" stroke="#444" stroke-width="1"/><rect x="432" y="901" width="4.500" height="9" fill="#2a2a2a"/><rect x="438" y="906" width="5" height="4" fill="#a8a8a8"/><rect x="431.500" y="912" width="5" height="3.500" fill="#a8a8a8"/><rect x="438" y="912" width="5" height="3.500" fill="#a8a8a8"/>
<path d="M432.500 932.500l4.500 4.500-4.500 4.500M438 932.500l4.500 4.500-4.500 4.500" stroke="#333" stroke-width="1.300" fill="none"/>
<path d="M462.500 929.500v11a6 2.300 0 0 0 12 0v-11" fill="#bdbdbd" stroke="#9a9a9a" stroke-width="0.800"/><ellipse cx="468.500" cy="929.500" rx="6" ry="2.300" fill="#d2d2d2" stroke="#9a9a9a" stroke-width="0.800"/><path d="M462.500 933.200a6 2.300 0 0 0 12 0M462.500 936.900a6 2.300 0 0 0 12 0" fill="none" stroke="#9a9a9a" stroke-width="0.800"/>
<rect x="642.500" y="311.500" width="257" height="245" fill="#fff" stroke="#111" stroke-width="1.200" filter="url(#sh)"/>
<g transform="translate(709.2 365.3)"><rect x="0.600" y="0.600" width="59.800" height="36.2" fill="#fff" stroke="#0072bd" stroke-width="1.500"/><path d="M0.600 2.900h59.800M0.600 5.800h59.800" stroke="#0072bd" stroke-width="1.100"/><rect x="56.600" y="31.0" width="3.800" height="5.200" fill="#fff" stroke="#0072bd" stroke-width="1.300"/><rect x="5.1" y="-0.300" width="8.600" height="8.600" fill="#fff" stroke="#e8601e" stroke-width="1.600"/><path d="M7.200 4.300h4.600M9.500 2v4.600" stroke="#e8601e" stroke-width="1.100"/><rect x="47.9" y="-0.300" width="8.600" height="8.600" fill="#fff" stroke="#e8601e" stroke-width="1.600"/><path d="M50.200 5.100h4" stroke="#e8601e" stroke-width="1.100"/></g>
<g transform="translate(704.8 385.2)"><rect x="0.600" y="0.600" width="59.800" height="36.2" fill="#fff" stroke="#0072bd" stroke-width="1.500"/><path d="M0.600 4.600h59.800" stroke="#0072bd" stroke-width="3.600"/><rect x="56.600" y="31.0" width="3.800" height="5.200" fill="#fff" stroke="#0072bd" stroke-width="1.300"/><rect x="5.1" y="-0.300" width="8.600" height="8.600" fill="#fff" stroke="#e8601e" stroke-width="1.600"/><path d="M7.200 4.300h4.600M9.500 2v4.600" stroke="#e8601e" stroke-width="1.100"/><rect x="47.9" y="-0.300" width="8.600" height="8.600" fill="#fff" stroke="#e8601e" stroke-width="1.600"/><path d="M50.200 5.100h4" stroke="#e8601e" stroke-width="1.100"/></g>
<g transform="translate(700.4 405.0)"><rect x="0.600" y="0.600" width="59.800" height="36.2" fill="#fff" stroke="#0072bd" stroke-width="1.500"/><path d="M0.600 2.900h59.800M0.600 5.800h59.800" stroke="#0072bd" stroke-width="1.100"/><rect x="56.600" y="31.0" width="3.800" height="5.200" fill="#fff" stroke="#0072bd" stroke-width="1.300"/><rect x="5.1" y="-0.300" width="8.600" height="8.600" fill="#fff" stroke="#e8601e" stroke-width="1.600"/><path d="M7.200 4.300h4.600M9.500 2v4.600" stroke="#e8601e" stroke-width="1.100"/><rect x="47.9" y="-0.300" width="8.600" height="8.600" fill="#fff" stroke="#e8601e" stroke-width="1.600"/><path d="M50.200 5.100h4" stroke="#e8601e" stroke-width="1.100"/></g>
<g transform="translate(695.9 424.9)"><rect x="0.600" y="0.600" width="59.800" height="36.2" fill="#fff" stroke="#0072bd" stroke-width="1.500"/><path d="M0.600 2.900h59.800M0.600 5.800h59.800" stroke="#0072bd" stroke-width="1.100"/><rect x="56.600" y="31.0" width="3.800" height="5.200" fill="#fff" stroke="#0072bd" stroke-width="1.300"/><rect x="5.1" y="-0.300" width="8.600" height="8.600" fill="#fff" stroke="#e8601e" stroke-width="1.600"/><path d="M7.200 4.300h4.600M9.500 2v4.600" stroke="#e8601e" stroke-width="1.100"/><rect x="47.9" y="-0.300" width="8.600" height="8.600" fill="#fff" stroke="#e8601e" stroke-width="1.600"/><path d="M50.200 5.100h4" stroke="#e8601e" stroke-width="1.100"/></g>
<g transform="translate(691.5 444.7)"><rect x="0.600" y="0.600" width="59.800" height="38.6" fill="#fff" stroke="#0072bd" stroke-width="1.500"/><path d="M0.600 4.600h59.800" stroke="#0072bd" stroke-width="3.600"/><path d="M0.600 33.400h59.800" stroke="#0072bd" stroke-width="3.600"/><rect x="5.1" y="-0.300" width="8.600" height="8.600" fill="#fff" stroke="#e8601e" stroke-width="1.600"/><path d="M7.200 4.300h4.600M9.500 2v4.600" stroke="#e8601e" stroke-width="1.100"/><rect x="47.9" y="-0.300" width="8.600" height="8.600" fill="#fff" stroke="#e8601e" stroke-width="1.600"/><path d="M50.200 5.100h4" stroke="#e8601e" stroke-width="1.100"/></g>
<g transform="translate(793.6 365.3)"><rect x="0.600" y="0.600" width="59.800" height="36.2" fill="#fff" stroke="#0072bd" stroke-width="1.500"/><path d="M0.600 4.600h59.800" stroke="#0072bd" stroke-width="3.600"/><rect x="56.600" y="31.0" width="3.800" height="5.200" fill="#fff" stroke="#0072bd" stroke-width="1.300"/><rect x="5.1" y="-0.300" width="8.600" height="8.600" fill="#fff" stroke="#e8601e" stroke-width="1.600"/><path d="M7.200 4.300h4.600M9.500 2v4.600" stroke="#e8601e" stroke-width="1.100"/><rect x="47.9" y="-0.300" width="8.600" height="8.600" fill="#fff" stroke="#e8601e" stroke-width="1.600"/><path d="M50.200 5.100h4" stroke="#e8601e" stroke-width="1.100"/></g>
<g transform="translate(789.2 385.4)"><rect x="0.600" y="0.600" width="59.800" height="36.2" fill="#fff" stroke="#0072bd" stroke-width="1.500"/><path d="M0.600 2.900h59.800M0.600 5.800h59.800" stroke="#0072bd" stroke-width="1.100"/><rect x="56.600" y="31.0" width="3.800" height="5.200" fill="#fff" stroke="#0072bd" stroke-width="1.300"/><rect x="5.1" y="-0.300" width="8.600" height="8.600" fill="#fff" stroke="#e8601e" stroke-width="1.600"/><path d="M7.200 4.300h4.600M9.500 2v4.600" stroke="#e8601e" stroke-width="1.100"/><rect x="47.9" y="-0.300" width="8.600" height="8.600" fill="#fff" stroke="#e8601e" stroke-width="1.600"/><path d="M50.200 5.100h4" stroke="#e8601e" stroke-width="1.100"/></g>
<g transform="translate(784.9 405.4)"><rect x="0.600" y="0.600" width="59.800" height="36.2" fill="#fff" stroke="#0072bd" stroke-width="1.500"/><path d="M0.600 4.600h59.800" stroke="#0072bd" stroke-width="3.600"/><rect x="56.600" y="31.0" width="3.800" height="5.200" fill="#fff" stroke="#0072bd" stroke-width="1.300"/><rect x="5.1" y="-0.300" width="8.600" height="8.600" fill="#fff" stroke="#e8601e" stroke-width="1.600"/><path d="M7.200 4.300h4.600M9.500 2v4.600" stroke="#e8601e" stroke-width="1.100"/><rect x="47.9" y="-0.300" width="8.600" height="8.600" fill="#fff" stroke="#e8601e" stroke-width="1.600"/><path d="M50.200 5.100h4" stroke="#e8601e" stroke-width="1.100"/></g>
<g transform="translate(780.6 425.5)"><rect x="0.600" y="0.600" width="59.800" height="36.2" fill="#fff" stroke="#0072bd" stroke-width="1.500"/><path d="M0.600 2.900h59.800M0.600 5.800h59.800" stroke="#0072bd" stroke-width="1.100"/><rect x="56.600" y="31.0" width="3.800" height="5.200" fill="#fff" stroke="#0072bd" stroke-width="1.300"/><rect x="5.1" y="-0.300" width="8.600" height="8.600" fill="#fff" stroke="#e8601e" stroke-width="1.600"/><path d="M7.200 4.300h4.600M9.500 2v4.600" stroke="#e8601e" stroke-width="1.100"/><rect x="47.9" y="-0.300" width="8.600" height="8.600" fill="#fff" stroke="#e8601e" stroke-width="1.600"/><path d="M50.200 5.100h4" stroke="#e8601e" stroke-width="1.100"/></g>
<g transform="translate(776.2 445.5)"><rect x="0.600" y="0.600" width="59.800" height="38.6" fill="#fff" stroke="#0072bd" stroke-width="1.500"/><path d="M0.600 2.900h59.800M0.600 5.800h59.800" stroke="#0072bd" stroke-width="1.100"/><path d="M0.600 32.800h59.800M0.600 35.200h59.800" stroke="#0072bd" stroke-width="1.100"/><rect x="5.1" y="-0.300" width="8.600" height="8.600" fill="#fff" stroke="#e8601e" stroke-width="1.600"/><path d="M7.200 4.300h4.600M9.500 2v4.600" stroke="#e8601e" stroke-width="1.100"/><rect x="47.9" y="-0.300" width="8.600" height="8.600" fill="#fff" stroke="#e8601e" stroke-width="1.600"/><path d="M50.200 5.100h4" stroke="#e8601e" stroke-width="1.100"/></g>
<text x="831.2" y="338.0" textLength="64.6" lengthAdjust="spacingAndGlyphs" style="font-size:10.2px;fill:#111">batteryCurrent</text>
<text x="807.5" y="388.8" textLength="88.3" lengthAdjust="spacingAndGlyphs" style="font-size:10.2px;fill:#111">batteryTemperature</text>
<text x="831.5" y="439.8" textLength="64.3" lengthAdjust="spacingAndGlyphs" style="font-size:10.2px;fill:#111">batteryVoltage</text>
<text x="845.5" y="491.0" textLength="50.3" lengthAdjust="spacingAndGlyphs" style="font-size:10.2px;fill:#111">numCycles</text>
<text x="862.4" y="542.2" textLength="33.4" lengthAdjust="spacingAndGlyphs" style="font-size:10.2px;fill:#111">socCell</text>
<text transform="translate(838.600 551.500) rotate(-90)" textLength="26" lengthAdjust="spacingAndGlyphs" style="font-size:10.200px;fill:#111">AmbH</text>
<path d="M769.500 317.300h5M772 314.800v5" stroke="#111" stroke-width="0.900"/>
<path d="M705.300 548.500v2.500" stroke="#111" stroke-width="0.900"/>
<path d="M900 334.4H949.600M937 328.9H949.600V339.9H937" stroke="#111" stroke-width="1.100" fill="none"/><path d="M922.300 330.1L931.300 334.4L922.300 338.7Z" fill="#111"/>
<path d="M900 385.2H949.600M937 379.7H949.600V390.7H937" stroke="#111" stroke-width="1.100" fill="none"/><path d="M922.300 380.9L931.300 385.2L922.300 389.5Z" fill="#111"/>
<path d="M900 436.2H949.600M937 430.7H949.600V441.7H937" stroke="#111" stroke-width="1.100" fill="none"/><path d="M922.300 431.9L931.300 436.2L922.300 440.5Z" fill="#111"/>
<path d="M900 487.4H949.600M937 481.9H949.600V492.9H937" stroke="#111" stroke-width="1.100" fill="none"/><path d="M922.300 483.1L931.300 487.4L922.300 491.7Z" fill="#111"/>
<path d="M900 538.500H970.400V638" stroke="#111" stroke-width="1.100" fill="none"/><path d="M966.100 636.500h8.600l-4.300 9z" fill="#111"/>
<rect x="953.500" y="645.500" width="34" height="34" fill="#fff" stroke="#111" stroke-width="1.200" filter="url(#sh)"/>
<text x="956.3" y="667.0" textLength="25.7" lengthAdjust="spacingAndGlyphs" style="font-size:13.5px;fill:#111">max</text>
<path d="M970.400 680V742.500M741 742.500H1058.500" stroke="#111" stroke-width="1.100" fill="none"/><circle cx="970.400" cy="742.500" r="2.700" fill="#111"/>
<path d="M742.200 738.200L733.200 742.500L742.200 746.800Z" fill="#111"/><path d="M1057.800 738.200L1066.800 742.500L1057.800 746.800Z" fill="#111"/>
<rect x="619.500" y="709.500" width="113.500" height="65.500" fill="url(#gSub)" stroke="#111" stroke-width="1.200" filter="url(#sh)"/>
<text x="622.5" y="746.2" textLength="33.8" lengthAdjust="spacingAndGlyphs" style="font-size:10.2px;fill:#111">Current</text>
<text x="706.8" y="746.2" textLength="22.0" lengthAdjust="spacingAndGlyphs" style="font-size:10.2px;fill:#111">SOC</text>
<text x="627.8" y="789.8" textLength="96.5" lengthAdjust="spacingAndGlyphs" style="font-size:11.3px;fill:#111">Test Current Profile</text>
<path d="M500.300 742.500H619.500" stroke="#111" stroke-width="1.100"/><circle cx="500.300" cy="742.500" r="2.700" fill="#111"/>
<text x="549.8" y="737.0" textLength="62.5" lengthAdjust="spacingAndGlyphs" style="font-size:10.2px;fill:#111">CurrentProfile</text>
<text x="993.3" y="755.0" textLength="33.9" lengthAdjust="spacingAndGlyphs" style="font-size:10.2px;fill:#111">socCell</text>
<text x="980.5" y="812.0" textLength="62.2" lengthAdjust="spacingAndGlyphs" style="font-size:10.2px;fill:#111">CurrentProfile</text>
<rect x="1067.500" y="714.500" width="62.500" height="111.500" fill="#fff" stroke="#111" stroke-width="1.200" filter="url(#sh)"/>
<rect x="1074.800" y="729.300" width="47" height="48.800" rx="6" fill="#fff" stroke="#111" stroke-width="1.100"/>
<path d="M1060.800 793l5.500 5.700-5.500 5.700" stroke="#111" stroke-width="2" fill="none"/>
<text x="1082.3" y="840.5" textLength="31.7" lengthAdjust="spacingAndGlyphs" style="font-size:11.3px;fill:#111">Scope</text>
<path d="M500.300 745V798.300H1017" stroke="#e02020" stroke-width="1.100" fill="none" stroke-dasharray="4.500 2.200"/><path d="M1012.500 794.300l5.300 4-5.300 4" stroke="#e02020" stroke-width="1" fill="none" stroke-dasharray="2.500 1.200"/>
<path d="M500.300 742.500V529.500" stroke="#111" stroke-width="1.100"/>
<path d="M500.300 521.800l3.900 7.700h-7.800z" fill="#111"/>
<path d="M500.300 512.800l3.700 7.500h-7.400z" fill="#fff" stroke="#111" stroke-width="1"/>
<path d="M500.300 467.500V512.500" stroke="#b0605c" stroke-width="1.100"/>
<path d="M500.300 460l3.700 7.500h-7.400z" fill="#fff" stroke="#111" stroke-width="1"/>
<rect x="488.500" y="413.300" width="46" height="45.200" fill="#fff" stroke="#3568d4" stroke-width="1.300"/><circle cx="511.300" cy="435.800" r="12.700" fill="#fff" stroke="#3568d4" stroke-width="1.300"/><path d="M511.300 443.500V430.500" stroke="#3568d4" stroke-width="1.300"/><path d="M511.300 428l2.100 4.600h-4.200z" fill="#3568d4"/>
<path d="M511.300 413.300V287.300a3 3 0 0 1 3-3H769.400a3 3 0 0 1 3 3V311.500" stroke="#3568d4" stroke-width="1.400" fill="none"/>
<path d="M522.800 458.500V591.400a3 3 0 0 0 3 3H724" stroke="#3568d4" stroke-width="1.400" fill="none"/>
<path d="M704.700 556.500V638" stroke="#3568d4" stroke-width="1.400" fill="none"/><circle cx="704.700" cy="594.400" r="3" fill="#3568d4"/>
<path d="M693 638.300h23M696 642.500h17M699 646.400h11M702 650.200h5" stroke="#3568d4" stroke-width="1.200"/>
<rect x="727.200" y="576.700" width="51.300" height="35.800" fill="#fff" stroke="#111" stroke-width="1.200" filter="url(#sh)"/>
<rect x="723.200" y="592.800" width="3.400" height="3.400" fill="#ddd" stroke="#333" stroke-width="0.800"/>
<text x="734.0" y="598.7" textLength="36.0" lengthAdjust="spacingAndGlyphs" style="font-size:11.3px;fill:#111">f(x) = 0</text>
<path d="M834.600 557V617" stroke="#e0601c" stroke-width="1.400"/>
<path d="M826.600 617.200h15.800l5.500 23h-26.800z" fill="#fff" stroke="#e0601c" stroke-width="1.300"/><path d="M834.600 636.500V626M830 630l4.600-5.500 4.600 5.500z" stroke="#e0601c" stroke-width="1.200" fill="#fff"/><path d="M834.600 640.200V650.500M826.500 643.800h16M826.500 647.200h16M826.500 650.500h16" stroke="#e0601c" stroke-width="1.300"/>
</svg>
<!-- ===== Training - Assessment panel ===== -->
<div class="a" style="left:1396px;top:156px;width:1416px;height:38px;width:416px;border:1px solid #dcdcdc"></div>
<div class="a" style="left:1402px;top:150px;width:74px;height:14px;background:#f0f0f0"></div>
<div class="a" style="left:1818px;top:121px;width:1px;height:832px;background:#a3a3a3"></div>
<!-- Property Inspector tab -->
<div class="a" style="left:1826px;top:123px;width:21px;height:110px;background:#fff;border:1px solid #dadada"></div>
<!-- right window edge -->
<div class="a" style="left:1851px;top:121px;width:1px;height:856px;background:#b9b9b9"></div>
<!-- status bar -->
<div class="a" style="left:0;top:975px;width:1852px;height:1px;background:#8e8e8e"></div>
<div class="a" style="left:0;top:976px;width:1852px;height:1px;background:#c6c6c6"></div>
<div class="a" style="left:1832px;top:957px;width:1px;height:17px;background:#dcdcdc"></div>
<svg width="1852" height="977">
<text x="1402" y="137" textLength="106" lengthAdjust="spacingAndGlyphs" style="font-size:11px;fill:#111">Training - Assessment</text>
<circle cx="1804" cy="133" r="5.300" fill="#f6f6f6" stroke="#555" stroke-width="0.900"/><path d="M1801 131.200h6l-3 4.300z" fill="#444"/>
<text x="1405" y="160" textLength="68.500" lengthAdjust="spacingAndGlyphs" style="font-size:11px;fill:#111">Requirements</text>
<text x="1406.500" y="185" style="font-size:17px;font-weight:700;fill:#8c8c8c">?</text>
<text x="1424.500" y="184.700" textLength="371" lengthAdjust="spacingAndGlyphs" style="font-size:12.800px;fill:#111">Is a signal named "CurrentProfile" connected to the Scope block?</text>
<text transform="translate(1833.300 134.500) rotate(90)" textLength="90" lengthAdjust="spacingAndGlyphs" style="font-size:11px;fill:#111">Property Inspector</text>
<text x="927.300" y="970" textLength="27.500" lengthAdjust="spacingAndGlyphs" style="font-size:11.500px;fill:#111">113%</text>
<text x="1735.800" y="970" textLength="90.500" lengthAdjust="spacingAndGlyphs" style="font-size:11.500px;fill:#1a1a7e">VariableStepAuto</text>
<path d="M1848 965v2M1845 968v2M1848 968v2M1842 971v2M1845 971v2M1848 971v2" stroke="#a9a9a9" stroke-width="2"/>
</svg>

</body></html>
